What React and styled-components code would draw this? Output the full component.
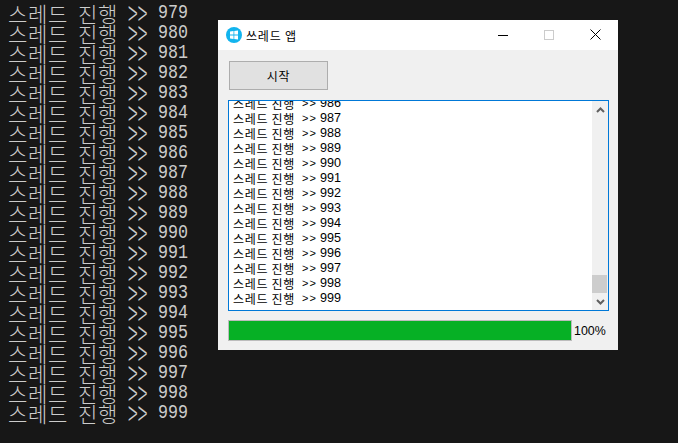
import styled, { createGlobalStyle } from 'styled-components';

const GlobalStyle = createGlobalStyle`
    html, body {
        margin: 0;
        padding: 0;
        height: 100%;
        background: #171717;
        overflow: hidden;
    }
`;

const Desktop = styled.div`
    position: relative;
    width: 678px;
    height: 443px;
    background: #171717;
    overflow: hidden;
`;

const Console = styled.div`
    display: flex;
    flex-direction: column;
    margin-top: 3px;
    padding-left: 8px;
    color: #cccccc;
`;

const ConsoleLine = styled.div`
    display: flex;
    height: 20px;
    align-items: center;
    white-space: pre;
`;

const ConsoleHangul = styled.span`
    font-family: "Noto Sans CJK KR", sans-serif;
    font-size: 21px;
    line-height: 20px;
    font-weight: 300;
    letter-spacing: 0.68px;
`;

const ConsoleGap = styled.span`
    width: 10px;
`;

/* the console font is a narrow one, so wider glyphs get squeezed into its 10px cells */
const ConsoleMono = styled.span`
    display: inline-block;
    width: 30px;
    font-family: "Liberation Mono", monospace;
    font-size: 21px;
    line-height: 20px;
    transform: scaleX(0.794);
    transform-origin: left center;
`;

const ConsoleArrows = styled.span`
    display: inline-block;
    width: 20px;
    margin-bottom: 4px;
    font-family: "Noto Sans CJK KR", sans-serif;
    font-weight: 300;
    font-size: 36px;
    line-height: 20px;
    transform: scaleX(0.5);
    transform-origin: left center;
`;

const Window = styled.div`
    position: absolute;
    left: 218px;
    top: 20px;
    width: 400px;
    height: 330px;
    display: flex;
    flex-direction: column;
    background: #f0f0f0;
`;

const TitleBar = styled.div`
    height: 30px;
    display: flex;
    align-items: center;
    background: #ffffff;
`;

const AppIcon = styled.svg`
    width: 16px;
    height: 16px;
    margin-left: 8px;
`;

const Title = styled.div`
    flex: 1;
    margin-left: 4px;
    font-family: "Noto Sans CJK KR", sans-serif;
    font-size: 12px;
    letter-spacing: 0.8px;
    color: #000;
`;

const Caption = styled.div`
    width: 46px;
    height: 30px;
    box-sizing: border-box;
    padding-bottom: 1px;
    display: flex;
    align-items: center;
    justify-content: center;
`;

const Body = styled.div`
    flex: 1;
    display: flex;
    flex-direction: column;
    padding: 11px 9px 0 10px;
`;

const StartButton = styled.button`
    width: 99px;
    height: 29px;
    margin: 0 0 10px 1px;
    padding: 0;
    box-sizing: border-box;
    border: 1px solid #adadad;
    background: #e1e1e1;
    color: #000;
    font-family: "Noto Sans CJK KR", sans-serif;
    font-size: 12px;
    letter-spacing: 0.8px;
`;

const ListBox = styled.div`
    height: 211px;
    box-sizing: border-box;
    display: flex;
    border: 1px solid #0078d7;
    background: #fff;
`;

const Rows = styled.div`
    flex: 1;
    display: flex;
    flex-direction: column;
    justify-content: flex-end;
    overflow: hidden;
    padding: 0 0 4px 4px;
`;

const Row = styled.div`
    flex: 0 0 15px;
    display: flex;
    align-items: center;
    white-space: pre;
    color: #000;
    font-family: "Noto Sans CJK KR", sans-serif;
    font-size: 12px;
    line-height: 15px;
    letter-spacing: 0.7px;
`;

const RowArrows = styled.span`
    font-family: "Liberation Sans", sans-serif;
    font-size: 11px;
    letter-spacing: 1px;
    margin-left: 7px;
`;

const RowNumber = styled.span`
    font-family: "Liberation Sans", sans-serif;
    font-size: 12.6px;
    letter-spacing: 0;
    margin-left: 3px;
`;

const ScrollBar = styled.div`
    width: 16px;
    display: flex;
    flex-direction: column;
    background: #f0f0f0;
`;

const ScrollArrow = styled.div`
    height: 17px;
    display: flex;
    align-items: center;
    justify-content: center;
`;

const ScrollTrack = styled.div`
    flex: 1;
    display: flex;
    flex-direction: column;
    justify-content: flex-end;
`;

const ScrollThumb = styled.div`
    width: 15px;
    height: 18px;
    background: #cdcdcd;
`;

const ProgressRow = styled.div`
    display: flex;
    align-items: center;
    gap: 2px;
    margin-top: 9px;
`;

const ProgressTrack = styled.div`
    width: 344px;
    height: 21px;
    box-sizing: border-box;
    border: 1px solid #bcbcbc;
    background: #e6e6e6;
`;

const ProgressFill = styled.div`
    height: 100%;
    background: #06b025;
`;

const Percent = styled.span`
    font-family: "Liberation Sans", sans-serif;
    font-size: 12.4px;
    color: #000;
`;

const range = (from, to) => Array.from({ length: to - from + 1 }, (_, i) => from + i);

function ArrowGlyph({ up }) {
    return (
        <svg width="9" height="6" viewBox="0 0 9 6">
            <path
                d={up ? 'M1 5 L4.5 1.5 L8 5' : 'M1 1 L4.5 4.5 L8 1'}
                fill="none"
                stroke="#606060"
                strokeWidth="2"
            />
        </svg>
    );
}

export default function App() {
    const progress = 100;

    return (
        <Desktop>
            <GlobalStyle />

            <Console>
                {range(979, 999).map((n) => (
                    <ConsoleLine key={n}>
                        <ConsoleHangul>스레드</ConsoleHangul>
                        <ConsoleGap />
                        <ConsoleHangul>진행</ConsoleHangul>
                        <ConsoleGap />
                        <ConsoleArrows>&gt;&gt;</ConsoleArrows>
                        <ConsoleGap />
                        <ConsoleMono>{n}</ConsoleMono>
                    </ConsoleLine>
                ))}
            </Console>

            <Window>
                <TitleBar>
                    <AppIcon viewBox="0 0 16 16">
                        <circle cx="8" cy="8" r="8" fill="#12b4ee" />
                        <path d="M4 4.5 L7.5 4 V7.6 H4 Z M8.3 3.9 L12 3.4 V7.6 H8.3 Z M4 8.4 H7.5 V12 L4 11.5 Z M8.3 8.4 H12 V12.6 L8.3 12.1 Z" fill="#fff" />
                    </AppIcon>
                    <Title>쓰레드 앱</Title>
                    <Caption>
                        <svg width="10" height="10" viewBox="0 0 10 10">
                            <path d="M0 5.5 H10" stroke="#000" strokeWidth="1" />
                        </svg>
                    </Caption>
                    <Caption>
                        <svg width="10" height="10" viewBox="0 0 10 10">
                            <rect x="0.5" y="0.5" width="9" height="9" fill="none" stroke="#cccccc" strokeWidth="1" />
                        </svg>
                    </Caption>
                    <Caption>
                        <svg width="11" height="11" viewBox="0 0 11 11">
                            <path d="M0.5 0.5 L10.5 10.5 M10.5 0.5 L0.5 10.5" stroke="#000" strokeWidth="1" />
                        </svg>
                    </Caption>
                </TitleBar>

                <Body>
                    <StartButton>시작</StartButton>

                    <ListBox>
                        <Rows>
                            {range(986, 999).map((n) => (
                                <Row key={n}>
                                    스레드 진행
                                    <RowArrows>&gt;&gt;</RowArrows>
                                    <RowNumber>{n}</RowNumber>
                                </Row>
                            ))}
                        </Rows>
                        <ScrollBar>
                            <ScrollArrow><ArrowGlyph up /></ScrollArrow>
                            <ScrollTrack><ScrollThumb /></ScrollTrack>
                            <ScrollArrow><ArrowGlyph /></ScrollArrow>
                        </ScrollBar>
                    </ListBox>

                    <ProgressRow>
                        <ProgressTrack>
                            <ProgressFill style={{ width: `${progress}%` }} />
                        </ProgressTrack>
                        <Percent>{progress}%</Percent>
                    </ProgressRow>
                </Body>
            </Window>
        </Desktop>
    );
}
